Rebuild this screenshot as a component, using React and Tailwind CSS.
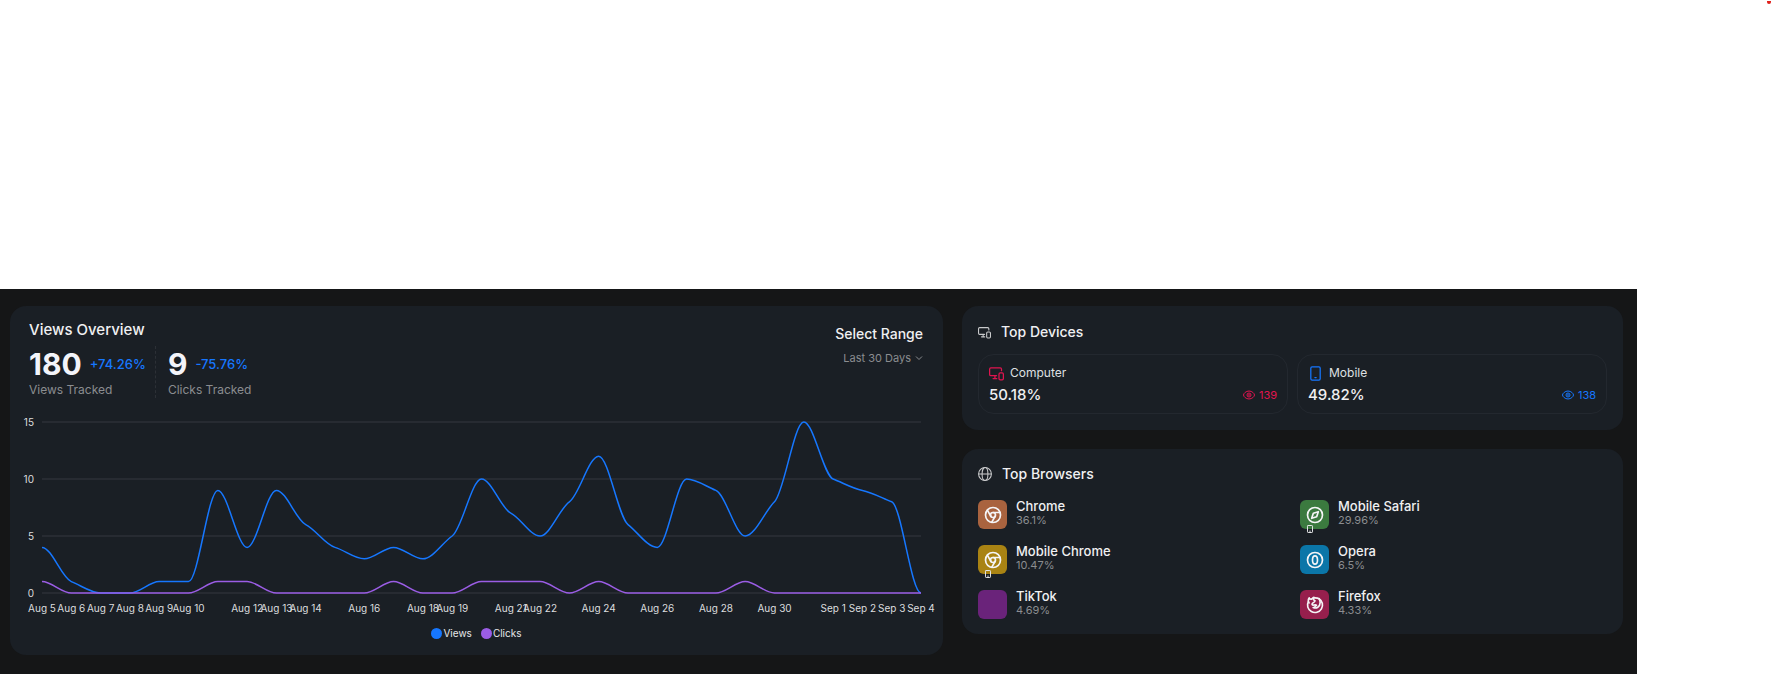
import { useState } from 'react'
import { TbBrandChrome, TbBrandFirefox, TbBrandOpera, TbBrandSafari } from 'react-icons/tb'

const VIEWS = [4, 1, 0, 0, 1, 1, 9, 4, 9, 6, 4, 3, 4, 3, 5, 10, 7, 5, 8, 12, 6, 4, 10, 9, 5, 8, 15, 10, 9, 8, 0]
const CLICKS = [1, 0, 0, 0, 0, 0, 1, 1, 0, 0, 0, 0, 1, 0, 0, 1, 1, 1, 0, 1, 0, 0, 0, 0, 1, 0, 0, 0, 0, 0, 0]

// index of the day -> tick label
const DAY_TICKS = [
  [0, 'Aug 5'],
  [1, 'Aug 6'],
  [2, 'Aug 7'],
  [3, 'Aug 8'],
  [4, 'Aug 9'],
  [5, 'Aug 10'],
  [7, 'Aug 12'],
  [8, 'Aug 13'],
  [9, 'Aug 14'],
  [11, 'Aug 16'],
  [13, 'Aug 18'],
  [14, 'Aug 19'],
  [16, 'Aug 21'],
  [17, 'Aug 22'],
  [19, 'Aug 24'],
  [21, 'Aug 26'],
  [23, 'Aug 28'],
  [25, 'Aug 30'],
  [27, 'Sep 1'],
  [28, 'Sep 2'],
  [29, 'Sep 3'],
  [30, 'Sep 4'],
]

const BROWSERS = [
  { name: 'Chrome', share: '36.1%', Icon: TbBrandChrome, tile: 'bg-[#a9633f]', mobile: false },
  { name: 'Mobile Safari', share: '29.96%', Icon: TbBrandSafari, tile: 'bg-[#3b7a3f]', mobile: true },
  { name: 'Mobile Chrome', share: '10.47%', Icon: TbBrandChrome, tile: 'bg-[#a98313]', mobile: true },
  { name: 'Opera', share: '6.5%', Icon: TbBrandOpera, tile: 'bg-[#0b76a8]', mobile: false },
  { name: 'TikTok', share: '4.69%', Icon: null, tile: 'bg-[#6a237a]', mobile: false },
  { name: 'Firefox', share: '4.33%', Icon: TbBrandFirefox, tile: 'bg-[#971f4d]', mobile: false },
]

const STEP = 29.3
const X0 = 32
const Y0 = 179
const UNIT = 11.4

// monotone cubic, so the line never overshoots a data point
function monotonePath(values) {
  const pts = values.map((v, i) => [X0 + i * STEP, Y0 - v * UNIT])
  const slopes = pts.slice(1).map((p, i) => (p[1] - pts[i][1]) / STEP)
  const tangents = pts.map((_, i) => {
    const a = slopes[i - 1]
    const b = slopes[i]
    if (a === undefined || b === undefined || a * b <= 0) return 0
    return Math.sign(a) * Math.min(Math.abs(a), Math.abs(b), Math.abs(a + b) / 4)
  })
  return pts
    .map(([x, y], i) => {
      if (i === 0) return `M${x},${y}`
      const [px, py] = pts[i - 1]
      const d = STEP / 3
      return `C${px + d},${py + tangents[i - 1] * d} ${x - d},${y - tangents[i] * d} ${x},${y}`
    })
    .join(' ')
}

function DevicesIcon({ className }) {
  return (
    <svg viewBox="0 0 24 24" fill="none" stroke="currentColor" strokeWidth="2" strokeLinecap="round" className={className} aria-hidden="true">
      <path d="M12 15.5H3a2 2 0 0 1-2-2V5a2 2 0 0 1 2-2h15a2 2 0 0 1 2 2v2.5M9.5 15.5v4M6.5 20h6" />
      <rect x="16" y="11" width="7" height="11" rx="2" />
    </svg>
  )
}

function PhoneIcon({ className, strokeWidth = 2 }) {
  return (
    <svg viewBox="0 0 24 24" fill="none" stroke="currentColor" strokeWidth={strokeWidth} strokeLinecap="round" className={className} aria-hidden="true">
      <rect x="4.5" y="1.5" width="15" height="21" rx="2" />
      <path d="M11 18.5h2" />
    </svg>
  )
}

function EyeIcon({ className }) {
  return (
    <svg viewBox="0 0 24 24" fill="none" stroke="currentColor" strokeWidth="2" className={className} aria-hidden="true">
      <path d="M1 12c0-3 5-8 11-8s11 5 11 8-5 8-11 8S1 15 1 12Z" />
      <circle cx="12" cy="12" r="4" />
      <circle cx="12" cy="12" r="1" />
    </svg>
  )
}

function GlobeIcon({ className }) {
  return (
    <svg viewBox="0 0 24 24" fill="none" stroke="currentColor" strokeWidth="1.8" className={className} aria-hidden="true">
      <circle cx="12" cy="12" r="11" />
      <ellipse cx="12" cy="12" rx="5" ry="11" />
      <path d="M1 12h22" />
    </svg>
  )
}

function Stat({ value, change, label }) {
  return (
    <div>
      <div className="flex items-center gap-2">
        <span className="text-[30px] leading-9 font-bold text-[#f3f4fa]">{value}</span>
        <span className="text-[13px] leading-5 font-medium text-[#1677ff]">{change}</span>
      </div>
      <div className="text-xs leading-4 text-[#8b8d90]">{label}</div>
    </div>
  )
}

function ViewsChart() {
  return (
    <svg viewBox="0 0 933 207" className="mt-4 block w-full" role="img" aria-label="Views and clicks per day">
      {[0, 5, 10, 15].map((v) => (
        <g key={v}>
          <line x1={X0} x2={X0 + 30 * STEP} y1={Y0 - v * UNIT} y2={Y0 - v * UNIT} stroke="#272b32" strokeWidth="2" />
          <text x="24" y={Y0 - v * UNIT + 4} textAnchor="end" fontSize="10" fill="#dcdddf">
            {v}
          </text>
        </g>
      ))}
      <path d={monotonePath(VIEWS)} fill="none" stroke="#1677ff" strokeWidth="1.5" />
      <path d={monotonePath(CLICKS)} fill="none" stroke="#9b5de5" strokeWidth="1.5" />
      {DAY_TICKS.map(([i, label]) => (
        <text key={label} x={X0 + i * STEP} y="198" textAnchor="middle" fontSize="10" fill="#dcdddf">
          {label}
        </text>
      ))}
    </svg>
  )
}

function ViewsOverview() {
  const [range, setRange] = useState('30')

  return (
    <section className="rounded-2xl bg-[#1a1f25] pt-3 pb-[14px]">
      <div className="flex items-start justify-between pr-5 pl-[19px]">
        <div>
          <h2 className="text-[15px] leading-6 font-medium text-[#f0f0f2]">Views Overview</h2>
          <div className="mt-1 flex">
            <div className="border-r border-dashed border-[#2c3036] pr-[9px]">
              <Stat value="180" change="+74.26%" label="Views Tracked" />
            </div>
            <div className="pl-3">
              <Stat value="9" change="-75.76%" label="Clicks Tracked" />
            </div>
          </div>
        </div>
        <div className="flex flex-col items-end pt-1">
          <label htmlFor="range" className="text-sm leading-6 font-medium text-[#f0f0f2]">
            Select Range
          </label>
          <div className="mt-0.5 flex items-center gap-1 text-[#8b8d90]">
            <select
              id="range"
              value={range}
              onChange={(e) => setRange(e.target.value)}
              className="appearance-none bg-transparent text-right text-[11px] leading-5 outline-none"
            >
              <option value="30">Last 30 Days</option>
            </select>
            <svg viewBox="0 0 8 8" className="size-2" fill="none" stroke="currentColor" aria-hidden="true">
              <path d="M1 2.5l3 3 3-3" />
            </svg>
          </div>
        </div>
      </div>

      <ViewsChart />

      <div className="mt-1 flex justify-center gap-[9px] text-[10px] leading-4 text-[#e6e7e9]">
        <div className="flex items-center gap-px">
          <span className="size-[11px] rounded-full bg-[#1677ff]" />
          Views
        </div>
        <div className="flex items-center gap-px">
          <span className="size-[11px] rounded-full bg-[#9b5de5]" />
          Clicks
        </div>
      </div>
    </section>
  )
}

function DeviceCard({ icon, name, share, views, viewsClass }) {
  return (
    <div className="rounded-2xl border border-[#23282f] px-[10px] py-2">
      <div className="flex items-center gap-[6px] text-xs leading-5 text-[#dfe0e2]">
        {icon}
        {name}
      </div>
      <div className="mt-0.5 flex items-center justify-between">
        <span className="text-[15px] leading-5 font-medium text-[#f0f0f2]">{share}</span>
        <span className={`flex items-center gap-1 text-[11px] leading-4 ${viewsClass}`}>
          <EyeIcon className="size-3" />
          {views}
        </span>
      </div>
    </div>
  )
}

function TopDevices() {
  return (
    <section className="rounded-2xl bg-[#1a1f25] px-4 pt-[14px] pb-4">
      <h2 className="flex items-center gap-[10px] text-sm leading-6 font-medium text-[#f0f0f2]">
        <DevicesIcon className="size-[13px] text-[#c9cacc]" />
        Top Devices
      </h2>
      <div className="mt-[10px] grid grid-cols-2 gap-[9px]">
        <DeviceCard
          icon={<DevicesIcon className="size-[15px] text-[#e0144f]" />}
          name="Computer"
          share="50.18%"
          views="139"
          viewsClass="text-[#e0144f]"
        />
        <DeviceCard
          icon={<PhoneIcon className="size-[15px] text-[#1677ff]" />}
          name="Mobile"
          share="49.82%"
          views="138"
          viewsClass="text-[#1677ff]"
        />
      </div>
    </section>
  )
}

function TopBrowsers() {
  return (
    <section className="rounded-2xl bg-[#1a1f25] px-4 pt-[13px] pb-[15px]">
      <h2 className="flex items-center gap-[10px] text-sm leading-6 font-medium text-[#f0f0f2]">
        <GlobeIcon className="size-[14px] text-[#c9cacc]" />
        Top Browsers
      </h2>
      <ul className="mt-[14px] grid grid-cols-2 gap-x-[15px] gap-y-4">
        {BROWSERS.map(({ name, share, Icon, tile, mobile }) => (
          <li key={name} className="flex items-start gap-[9px]">
            <div className={`relative flex size-[29px] items-center justify-center rounded-md text-[#f5f5f7] ${tile}`}>
              {Icon ? <Icon className="size-5" aria-hidden="true" /> : null}
              {mobile ? (
                <PhoneIcon className="absolute -bottom-1 left-[6px] size-2 text-[#e2e3e5]" strokeWidth={3} />
              ) : null}
            </div>
            <div>
              <div className="text-[13px] leading-3 font-medium text-[#f0f0f2]">{name}</div>
              <div className="text-[11px] leading-4 text-[#8b8d90]">{share}</div>
            </div>
          </li>
        ))}
      </ul>
    </section>
  )
}

export default function App() {
  return (
    <div className="min-h-screen bg-white font-['Inter',sans-serif]">
      <div className="flex h-[289px] justify-end pt-px pr-px">
        <span className="h-[3px] w-1 rounded-b-xs bg-[#e0201b]" />
      </div>
      <main className="mr-[135px] grid grid-cols-[933fr_661fr] items-start gap-[19px] bg-[#151617] pt-[17px] pr-[14px] pb-[19px] pl-[10px]">
        <ViewsOverview />
        <div className="grid gap-[19px]">
          <TopDevices />
          <TopBrowsers />
        </div>
      </main>
    </div>
  )
}
